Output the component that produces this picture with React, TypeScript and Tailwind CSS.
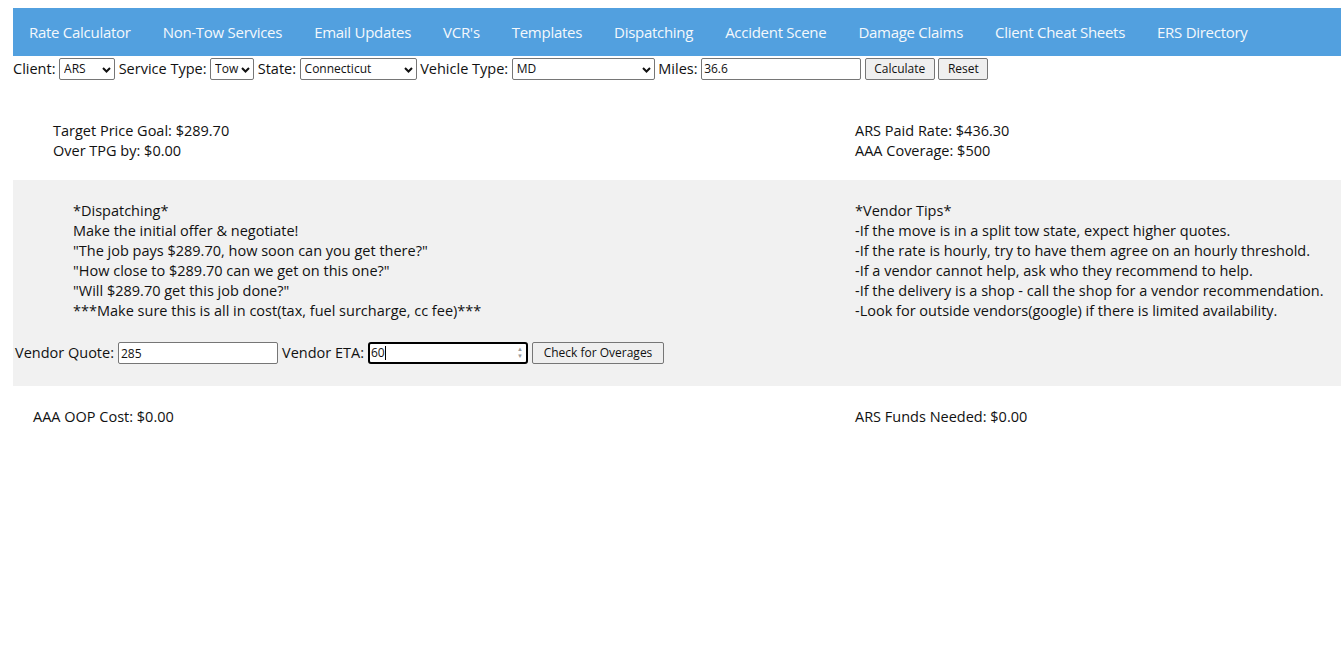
import React from "react";

const navItems = [
  "Rate Calculator",
  "Non-Tow Services",
  "Email Updates",
  "VCR's",
  "Templates",
  "Dispatching",
  "Accident Scene",
  "Damage Claims",
  "Client Cheat Sheets",
  "ERS Directory",
];

const tips = [
  "*Vendor Tips*",
  "-If the move is in a split tow state, expect higher quotes.",
  "-If the rate is hourly, try to have them agree on an hourly threshold.",
  "-If a vendor cannot help, ask who they recommend to help.",
  "-If the delivery is a shop - call the shop for a vendor recommendation.",
  "-Look for outside vendors(google) if there is limited availability.",
];

const dispatch = [
  "*Dispatching*",
  "Make the initial offer & negotiate!",
  '"The job pays $289.70, how soon can you get there?"',
  '"How close to $289.70 can we get on this one?"',
  '"Will $289.70 get this job done?"',
  "***Make sure this is all in cost(tax, fuel surcharge, cc fee)***",
];

const field =
  "h-[22px] border border-[#767676] rounded-[2px] bg-white text-[12px] text-[#111] pl-[2px] pr-0 outline-none";
const btn =
  "h-[22px] border border-[#767676] rounded-[2px] bg-[#efefef] text-[12px] text-[#111] px-[4px]";

function Select({ value, width }: { value: string; width: string }) {
  return (
    <div className={`relative ${width}`}>
      <select className={`${field} w-full appearance-none pl-[4px]`} defaultValue={value}>
        <option>{value}</option>
      </select>
      <svg
        className="absolute right-[4px] top-[9px] pointer-events-none"
        width="9"
        height="6"
        viewBox="0 0 9 6"
      >
        <polyline points="1,1 4.5,4.5 8,1" fill="none" stroke="#111" strokeWidth="2" />
      </svg>
    </div>
  );
}

export default function App() {
  return (
    <div className="min-h-screen bg-white pt-2 pl-[13px] text-[14.5px] leading-5 text-[#111] font-['Open_Sans',sans-serif]">
      {/* Nav */}
      <nav className="h-12 bg-[#52a0df] flex items-center">
        {navItems.map((item) => (
          <a key={item} className="px-4 text-[15px] text-[#f4f8fc] tracking-[-0.28px]">
            {item}
          </a>
        ))}
      </nav>

      {/* Calculator controls */}
      <div className="flex items-center gap-[3.6px] h-6 pt-px">
        <span>Client:</span>
        <Select value="ARS" width="w-[56px]" />
        <span>Service Type:</span>
        <Select value="Tow" width="w-[44px]" />
        <span>State:</span>
        <Select value="Connecticut" width="w-[117px]" />
        <span>Vehicle Type:</span>
        <Select value="MD" width="w-[143px]" />
        <span>Miles:</span>
        <input className={`${field} w-[160px]`} defaultValue="36.6" />
        <button className={`${btn} w-[70px]`}>Calculate</button>
        <button className={`${btn} w-[50px]`}>Reset</button>
      </div>

      {/* Price summary */}
      <div className="grid grid-cols-[842px_1fr] pt-[41px] pb-[19px]">
        <div className="pl-10">
          <div>Target Price Goal: $289.70</div>
          <div>Over TPG by: $0.00</div>
        </div>
        <div>
          <div>ARS Paid Rate: $436.30</div>
          <div>AAA Coverage: $500</div>
        </div>
      </div>

      {/* Dispatching panel */}
      <div className="bg-[#f1f1f1] grid grid-cols-[842px_1fr] pt-[21px] pb-[22px]">
        <div>
          <div className="pl-[60px]">
            {dispatch.map((l) => (
              <div key={l}>{l}</div>
            ))}
          </div>
          <div className="flex items-center gap-1 mt-[21px] pl-[2px] h-[22px]">
            <span>Vendor Quote:</span>
            <input className={`${field} w-[160px]`} defaultValue="285" />
            <span>Vendor ETA:</span>
            <div className="relative h-[22px] w-[160px] border-2 border-black rounded-[3px] bg-white flex items-center">
              <span className="text-[12px] pl-[1px]">60</span>
              <span className="w-px h-[14px] bg-black" />
              <div className="absolute right-[3px] top-[2px] flex flex-col items-center text-[#999] text-[6px] leading-[7px]">
                <span>▲</span>
                <span>▼</span>
              </div>
            </div>
            <button className={`${btn} w-[132px]`}>Check for Overages</button>
          </div>
        </div>
        <div>
          {tips.map((t) => (
            <div key={t}>{t}</div>
          ))}
        </div>
      </div>

      {/* Funds */}
      <div className="grid grid-cols-[842px_1fr] pt-[21px]">
        <div className="pl-5">AAA OOP Cost: $0.00</div>
        <div>ARS Funds Needed: $0.00</div>
      </div>
    </div>
  );
}
